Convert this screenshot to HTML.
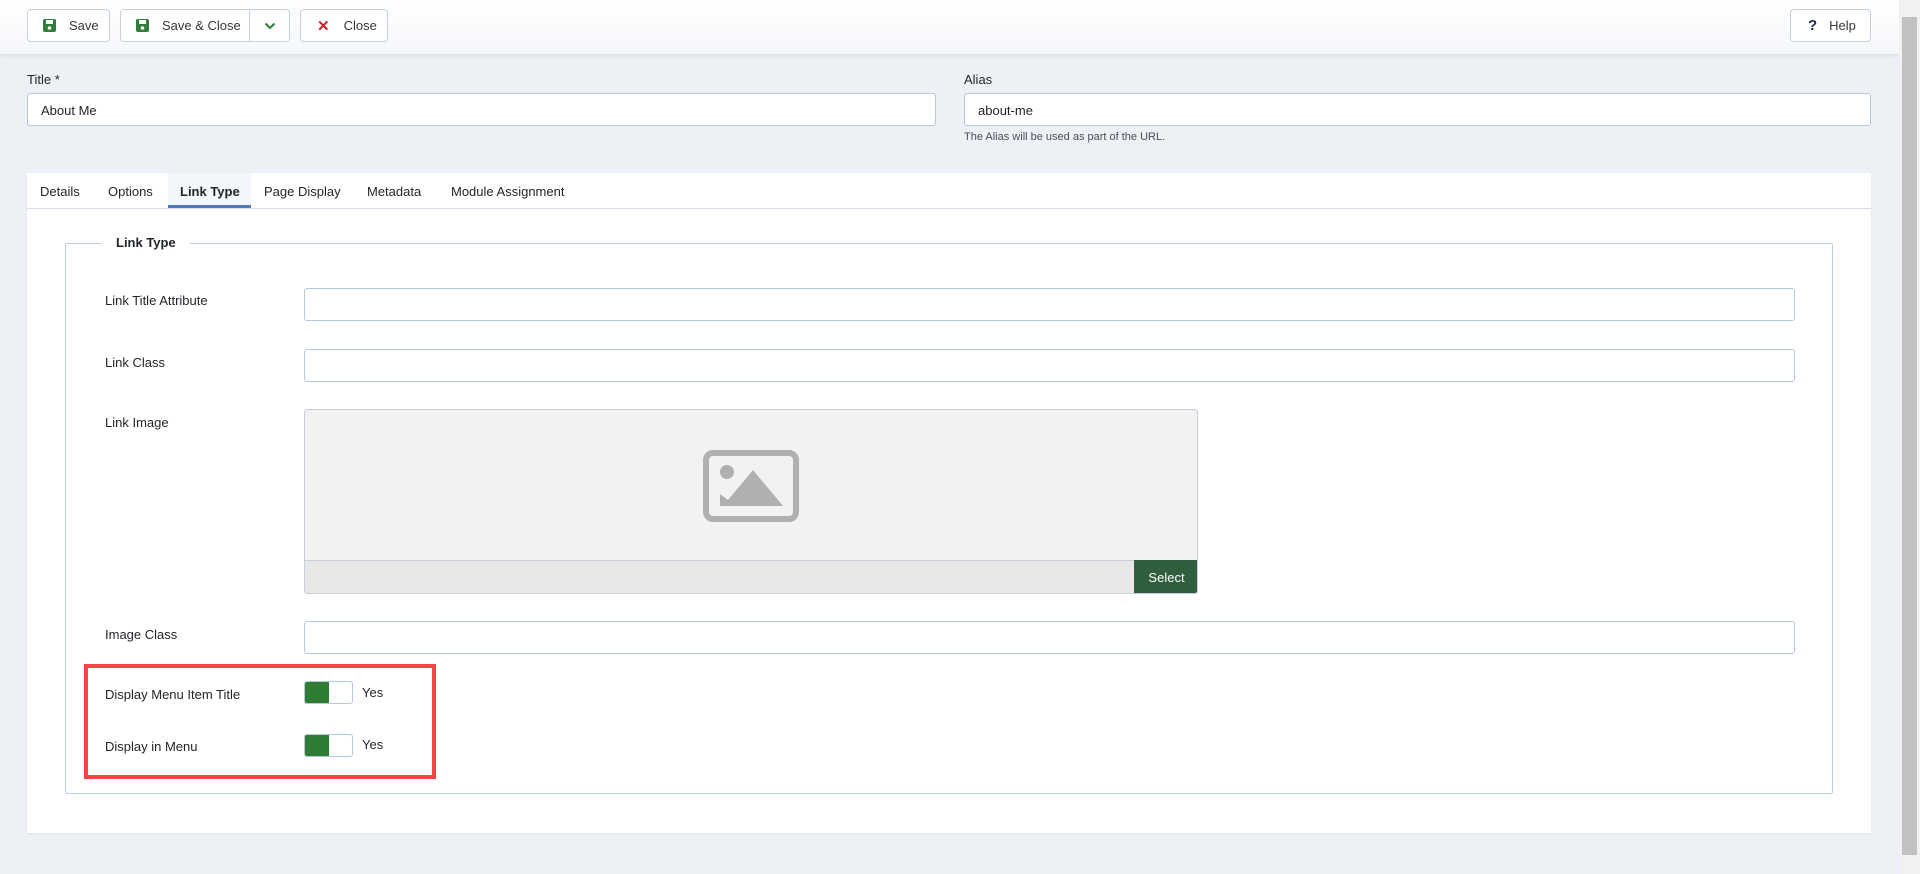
<!DOCTYPE html>
<html><head><meta charset="utf-8"><style>
*{box-sizing:border-box;margin:0;padding:0}
body{width:1920px;height:874px;overflow:hidden;background:#edf1f5;font-family:"Liberation Sans",Arial,sans-serif;font-size:13px;color:#22262a;position:relative}
.abs{position:absolute}
.tb{left:0;top:0;width:1899px;height:54px;background:linear-gradient(#fff,#f5f7fa);box-shadow:0 2px 4px rgba(0,0,0,.08)}
.btn{position:absolute;top:9px;height:33px;border:1px solid #c8d0da;border-radius:4px;background:#fff;display:flex;align-items:center;font-size:13px;color:#33373b}
.inp{position:absolute;background:#fff;border:1px solid #b6c6dc;border-radius:3px;height:33px}
.lbl{position:absolute;font-size:13px}
.sb{left:1899px;top:0;width:21px;height:874px;background:#f1f1f1}
.tog{position:absolute;width:49px;height:23px;border:1px solid #b6c6dc;border-radius:3px;background:#fff;overflow:hidden}
.tog i{position:absolute;left:0;top:0;width:24px;height:100%;background:#2e7d32}
</style></head><body>
<div class="abs tb"></div>
<div class="btn" style="left:27px;width:83px"><svg style="margin-left:15px" width="13" height="13" viewBox="0 0 13 13"><rect x="0" y="0" width="13" height="13" rx="2" fill="#2f7d3b"/><rect x="3" y="1" width="7" height="4" fill="#fff"/><circle cx="6.5" cy="9" r="1.8" fill="#fff"/></svg><span style="margin-left:13px">Save</span></div>
<div class="btn" style="left:120px;width:170px"><svg style="margin-left:15px" width="13" height="13" viewBox="0 0 13 13"><rect x="0" y="0" width="13" height="13" rx="2" fill="#2f7d3b"/><rect x="3" y="1" width="7" height="4" fill="#fff"/><circle cx="6.5" cy="9" r="1.8" fill="#fff"/></svg><span style="margin-left:13px">Save &amp; Close</span><span style="position:absolute;left:128px;top:0;bottom:0;border-left:1px solid #c8d0da;width:41px;display:flex;align-items:center;justify-content:center"><svg width="12" height="8" viewBox="0 0 12 8"><path d="M1.5 1.5 6 6 10.5 1.5" stroke="#2f7d3b" stroke-width="2" fill="none"/></svg></span></div>
<div class="btn" style="left:300px;width:88px"><span style="margin-left:16px;color:#c62828;font-weight:bold;font-size:15px">✕</span><span style="margin-left:14px">Close</span></div>
<div class="btn" style="left:1790px;width:81px"><span style="margin-left:17px;font-weight:bold;font-size:15px;color:#1c2b48">?</span><span style="margin-left:12px">Help</span></div>

<div class="lbl" style="left:27px;top:72px">Title *</div>
<div class="inp" style="left:27px;top:93px;width:909px"><span class="abs" style="left:13px;top:9px">About Me</span></div>
<div class="lbl" style="left:964px;top:72px">Alias</div>
<div class="inp" style="left:964px;top:93px;width:907px"><span class="abs" style="left:13px;top:9px">about-me</span></div>
<div class="lbl" style="left:964px;top:131px;font-size:11px;color:#495057">The Alias will be used as part of the URL.</div>

<div class="abs" style="left:27px;top:173px;width:1844px;height:660px;background:#fff;box-shadow:0 1px 2px rgba(0,0,0,.05)"></div>
<div class="abs" style="left:27px;top:208px;width:1844px;border-top:1px solid #d4dde8"></div>
<div class="abs" style="left:168px;top:173px;width:83px;height:35px;background:#f3f6fa;border-bottom:3px solid #4b7bc2"></div>
<div class="lbl" style="left:40px;top:184px">Details</div>
<div class="lbl" style="left:108px;top:184px">Options</div>
<div class="lbl" style="left:180px;top:184px;font-weight:bold">Link Type</div>
<div class="lbl" style="left:264px;top:184px">Page Display</div>
<div class="lbl" style="left:367px;top:184px">Metadata</div>
<div class="lbl" style="left:451px;top:184px">Module Assignment</div>

<div class="abs" style="left:65px;top:243px;width:1768px;height:551px;border:1px solid #c0cfe2;border-radius:2px"></div>
<div class="abs" style="left:102px;top:234px;padding:0 14px;background:#fff;font-weight:bold;font-size:13px;line-height:18px">Link Type</div>

<div class="lbl" style="left:105px;top:293px">Link Title Attribute</div>
<div class="inp" style="left:304px;top:288px;width:1491px"></div>
<div class="lbl" style="left:105px;top:355px">Link Class</div>
<div class="inp" style="left:304px;top:349px;width:1491px"></div>
<div class="lbl" style="left:105px;top:415px">Link Image</div>
<div class="abs" style="left:304px;top:409px;width:894px;height:185px;background:#f2f2f2;border:1px solid #c6cfda;border-radius:3px;overflow:hidden">
<svg class="abs" style="left:398px;top:40px" width="96" height="72" viewBox="0 0 96 72"><rect x="3" y="3" width="90" height="66" rx="7" fill="none" stroke="#b0b0b0" stroke-width="6"/><circle cx="24" cy="22" r="7" fill="#b0b0b0"/><path d="M17 56 L17 44 L25 50 L50 20 L80 56 Z" fill="#b0b0b0"/></svg>
<div class="abs" style="left:0;top:150px;width:894px;height:35px;background:#e8e8e8;border-top:1px solid #c6cfda"></div>
<div class="abs" style="left:829px;top:150px;width:65px;height:35px;background:#305f3e;color:#fff;font-size:13px;display:flex;align-items:center;justify-content:center">Select</div>
</div>
<div class="lbl" style="left:105px;top:627px">Image Class</div>
<div class="inp" style="left:304px;top:621px;width:1491px"></div>

<div class="abs" style="left:84px;top:664px;width:352px;height:115px;border:4px solid #f44444"></div>
<div class="lbl" style="left:105px;top:687px">Display Menu Item Title</div>
<div class="tog" style="left:304px;top:681px"><i></i></div>
<div class="lbl" style="left:362px;top:685px">Yes</div>
<div class="lbl" style="left:105px;top:739px">Display in Menu</div>
<div class="tog" style="left:304px;top:734px"><i></i></div>
<div class="lbl" style="left:362px;top:737px">Yes</div>

<div class="abs sb"><div class="abs" style="left:3px;top:17px;width:15px;height:838px;background:#c1c1c1"></div></div>
</body></html>
